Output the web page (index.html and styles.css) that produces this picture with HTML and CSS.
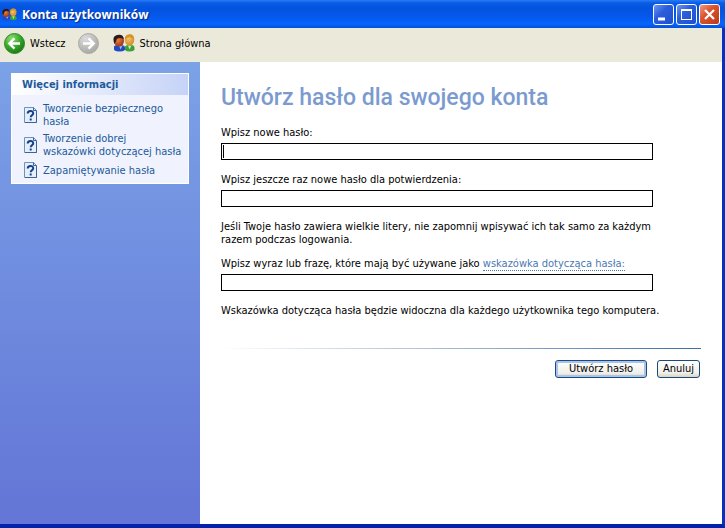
FILE: index.html
```html
<!DOCTYPE html>
<html lang="pl">
<head>
<meta charset="utf-8">
<title>Konta użytkowników</title>
<link rel="stylesheet" href="styles.css">
</head>
<body>
<svg class="defs" width="0" height="0" aria-hidden="true">
  <defs>
    <radialGradient id="orange" cx=".4" cy=".4" r=".7"><stop offset="0" stop-color="#f08040"/><stop offset="1" stop-color="#8c2e10"/></radialGradient>
    <radialGradient id="yellow" cx=".4" cy=".3" r=".8"><stop offset="0" stop-color="#f8c874"/><stop offset="1" stop-color="#c8841c"/></radialGradient>
    <radialGradient id="green" cx=".35" cy=".25" r=".85"><stop offset="0" stop-color="#8ade70"/><stop offset=".55" stop-color="#35a428"/><stop offset="1" stop-color="#127010"/></radialGradient>
    <radialGradient id="grey" cx=".35" cy=".25" r=".85"><stop offset="0" stop-color="#dcdcdc"/><stop offset="1" stop-color="#a2a2a0"/></radialGradient>
    <symbol id="users" viewBox="0 0 22 18">
      <path d="M1 16v-3q0-2 4-2h3q4 0 4 3v2q-2 1.500-5.500 1.500T1 16z" fill="#2348c4"/>
      <path d="M6 11.500l1.500 4 2-4z" fill="#9fc0ff"/>
      <ellipse cx="6" cy="7" rx="5" ry="5.500" fill="url(#orange)"/>
      <path d="M1.500 10Q-1.500 2.500 4 1q6-1.500 7 4Q8.500 3.800 6.500 4 3.500 4 3.300 6.500z" fill="#2c1a1c"/>
      <path d="M12 16v-3q0-2 4-2h2q3.500 0 3.500 3v2q-2 1.500-5 1.500T12 16z" fill="#3f9f35"/>
      <path d="M15 11.500l1.500 4 2-4z" fill="#c5efb5"/>
      <ellipse cx="16.500" cy="6" rx="4.700" ry="5.600" fill="url(#yellow)"/>
      <path d="M11.800 6Q11.500.5 16.500.3T21.200 6q-1.700-2.800-4.700-2.800T11.800 6z" fill="#d69428"/>
    </symbol>
    <symbol id="help" viewBox="0 0 13 16">
      <path d="M.5.500h9l3 3v12H.500z" fill="#e4effb" stroke="#6e91bd"/>
      <path d="M9.500.500v3h3M12.500 4v11.500H1" fill="none" stroke="#3c6296"/>
      <path d="M3.700 6.500Q3.700 4 6.500 4T9.200 6.500C9.200 8.200 6.700 8 6.700 10.300" fill="none" stroke="#153f8c" stroke-width="2"/>
      <path d="M5.700 11.500h2v2h-2z" fill="#153f8c"/>
    </symbol>
  </defs>
</svg>
<div class="window">
  <header class="titlebar">
    <svg class="title-icon"><use href="#users"/></svg>
    <span class="title">Konta użytkowników</span>
    <div class="controls">
      <button class="control" type="button" aria-label="Minimalizuj"><svg viewBox="0 0 19 19"><path d="M4 12.500h7v3H4z" fill="#fff"/></svg></button>
      <button class="control" type="button" aria-label="Maksymalizuj"><svg viewBox="0 0 19 19"><path d="M4 4h11v11H4zM5 6v8h9V6z" fill="#fff" fill-rule="evenodd"/></svg></button>
      <button class="control close" type="button" aria-label="Zamknij"><svg viewBox="0 0 19 19"><path d="M5 5l9 9M14 5l-9 9" stroke="#fff" stroke-width="2.200"/></svg></button>
    </div>
  </header>
  <nav class="toolbar">
    <button class="tool back" type="button">
      <svg class="nav-icon" viewBox="0 0 21 21"><circle cx="10.500" cy="10.500" r="10" fill="url(#green)" stroke="#2b8a25"/><path d="M16 10.500H5.500M10.500 5.300L5.300 10.500l5.200 5.200" fill="none" stroke="#fff" stroke-width="2.400"/></svg>
      <span>Wstecz</span>
    </button>
    <button class="tool forward" type="button" aria-label="Dalej">
      <svg class="nav-icon" viewBox="0 0 21 21"><circle cx="10.500" cy="10.500" r="10" fill="url(#grey)" stroke="#a9a9a5"/><path d="M5 10.500h10.500M10.500 5.300l5.200 5.200-5.200 5.200" fill="none" stroke="#fff" stroke-width="2.400"/></svg>
    </button>
    <button class="tool" type="button">
      <svg class="home-icon"><use href="#users"/></svg>
      <span>Strona główna</span>
    </button>
  </nav>
  <div class="content">
    <aside class="sidebar">
      <section class="panel">
        <h2>Więcej informacji</h2>
        <ul>
          <li><svg class="help-icon"><use href="#help"/></svg><a href="#">Tworzenie bezpiecznego hasła</a></li>
          <li><svg class="help-icon"><use href="#help"/></svg><a href="#">Tworzenie dobrej<br>wskazówki dotyczącej hasła</a></li>
          <li><svg class="help-icon"><use href="#help"/></svg><a href="#">Zapamiętywanie hasła</a></li>
        </ul>
      </section>
    </aside>
    <main>
      <h1>Utwórz hasło dla swojego konta</h1>
      <form>
        <div class="field">
          <label for="new">Wpisz nowe hasło:</label>
          <input class="current" id="new" type="password">
        </div>
        <div class="field">
          <label for="confirm">Wpisz jeszcze raz nowe hasło dla potwierdzenia:</label>
          <input id="confirm" type="password">
        </div>
        <p>Jeśli Twoje hasło zawiera wielkie litery, nie zapomnij wpisywać ich tak samo za każdym razem podczas logowania.</p>
        <div class="field">
          <div class="label-row"><label for="hint">Wpisz wyraz lub frazę, które mają być używane jako</label> <a class="hint" href="#">wskazówka dotycząca hasła:</a></div>
          <input id="hint" type="text">
        </div>
        <p>Wskazówka dotycząca hasła będzie widoczna dla każdego użytkownika tego komputera.</p>
        <div class="actions">
          <button class="button primary" type="submit">Utwórz hasło</button>
          <button class="button" type="button">Anuluj</button>
        </div>
      </form>
    </main>
  </div>
</div>
</body>
</html>
```
FILE: styles.css
```css
* { box-sizing: border-box; }

body {
  margin: 0;
  font: 11px/13px "DejaVu Sans Condensed", "DejaVu Sans", sans-serif;
  color: #000;
}

button, input { font: inherit; color: inherit; }
h1, h2, p, ul { margin: 0; padding: 0; }
.defs { position: absolute; }

.window {
  display: flex;
  flex-direction: column;
  min-height: 100vh;
  border-right: 3px solid #0831c4;
  border-bottom: 4px solid #0322ac;
  background: #fff;
}

.titlebar {
  display: flex;
  align-items: center;
  height: 28px;
  padding: 0 2px;
  margin-right: -3px;
  background: linear-gradient(#2a7cf0 0, #0a5ce8 3px, #0453dd 8px, #0559ee 18px, #0665fb 24px, #0450d8 28px);
}

.title-icon { width: 15px; height: 13px; margin-right: 5px; }

.title {
  flex: 1;
  padding-top: 2px;
  font: bold 12px/16px "Open Sans", sans-serif;
  color: #fff;
  text-shadow: 1px 1px 1px #0a2a80;
}

.controls { display: flex; gap: 2px; padding-right: 3px; }

.control {
  width: 21px;
  height: 21px;
  padding: 0;
  border: 1px solid #fff;
  border-radius: 3px;
  background: linear-gradient(135deg, #6c98f0, #2c5edc 40%, #1f50cc);
}

.control svg { display: block; width: 19px; height: 19px; }
.close { background: linear-gradient(135deg, #ee9a80, #dc5330 40%, #b83a18); }

.toolbar {
  display: flex;
  align-items: center;
  height: 34px;
  padding: 0 4px 4px;
  background: #ebe9da;
}

.tool {
  display: flex;
  align-items: center;
  gap: 5px;
  padding: 0;
  border: 0;
  background: none;
}

.back { margin-right: 12px; }
.forward { margin-right: 14px; }
.nav-icon { width: 21px; height: 21px; }
.home-icon { width: 22px; height: 18px; }

.content { display: flex; flex: 1; }

.sidebar {
  flex: none;
  width: 200px;
  padding: 11px;
  background: linear-gradient(#7ba2e7, #6375d6);
}

.panel { background: #f0f3fd; border: 1px solid #fff; }

.panel h2 {
  padding: 4px 10px;
  font-size: 11px;
  line-height: 13px;
  color: #225a9c;
  background: linear-gradient(90deg, #fff, #c6d3f7);
}

.panel ul {
  display: flex;
  flex-direction: column;
  gap: 4px;
  padding: 7px 0 5px 12px;
  list-style: none;
}

.panel li { display: flex; align-items: center; gap: 6px; }
.panel a { color: #225a9c; text-decoration: none; }
.help-icon { flex: none; width: 13px; height: 16px; }

main { flex: 1; padding: 22px 21px; }

h1 {
  margin-bottom: 14px;
  font: 500 23px/28px Roboto, sans-serif;
  color: #7b9bd0;
}

form { display: flex; flex-direction: column; gap: 13px; }
.field { display: flex; flex-direction: column; gap: 4px; max-width: 432px; }
form p { max-width: 450px; margin-bottom: -2px; }
.label-row { height: 13px; }

.field input {
  width: 100%;
  height: 17px;
  padding: 0 1px;
  border: 1px solid #000;
  border-radius: 0;
  outline: 0;
  background: #fff;
}

/* Text caret of the field being edited */
.field .current {
  background: linear-gradient(#000, #000) 1px 1px / 1px 13px no-repeat #fff;
}

.hint { color: #4a78b4; text-decoration: none; border-bottom: 1px dotted #4a78b4; }

.actions {
  display: flex;
  justify-content: flex-end;
  gap: 10px;
  margin-top: 20px;
  padding: 11px 1px 0 0;
  border-top: 1px solid;
  border-image: linear-gradient(90deg, #fff, #3a6ea0) 1;
}

.button {
  min-width: 43px;
  height: 18px;
  padding: 0 4px;
  line-height: 14px;
  border: 1px solid #1c4a78;
  border-radius: 3px;
  background: linear-gradient(#fff, #f0efe8 75%, #d8d3c4);
}

.primary { min-width: 92px; box-shadow: inset 0 0 0 2px #a8c4ee; }
```
